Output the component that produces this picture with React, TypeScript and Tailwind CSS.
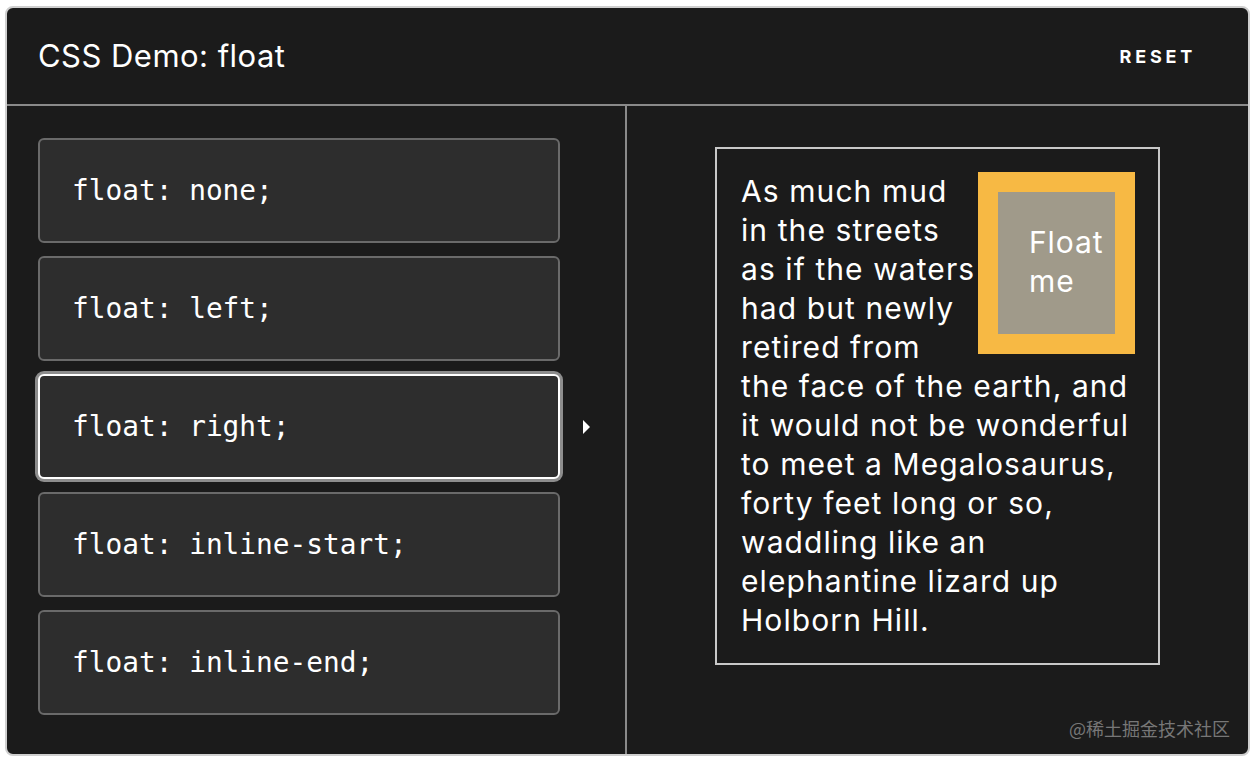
import React from "react";

const options = [
  "float: none;",
  "float: left;",
  "float: right;",
  "float: inline-start;",
  "float: inline-end;",
];

const lines = [
  "As much mud",
  "in the streets",
  "as if the waters",
  "had but newly",
  "retired from",
  "the face of the earth, and",
  "it would not be wonderful",
  "to meet a Megalosaurus,",
  "forty feet long or so,",
  "waddling like an",
  "elephantine lizard up",
  "Holborn Hill.",
];

export default function App() {
  return (
    <div className="w-[1254px] h-[764px] bg-white pt-[6px] pl-[5px]">
      <div className="w-[1245px] h-[750px] rounded-[8px] border-2 border-[#cfcfcf] bg-[#1b1b1b] flex flex-col overflow-hidden font-['Inter',sans-serif] text-white">
        {/* header */}
        <div className="h-[98px] flex items-center justify-between pl-[31px] pr-[52px] border-b-2 border-[#8a8a8a]">
          <h1 className="text-[31px] font-normal tracking-[0.015em]">CSS Demo: float</h1>
          <button className="text-[18px] font-bold tracking-[0.21em]">RESET</button>
        </div>

        <div className="flex flex-1 relative">
          {/* choices */}
          <div className="w-[620px] border-r-2 border-[#8a8a8a] pl-[31px] pt-[32px] flex flex-col gap-[13px]">
            {options.map((o, i) => {
              const active = i === 2;
              return (
                <div key={o} className="flex items-center">
                  <div
                    className={
                      active
                        ? "w-[522px] h-[105px] rounded-[6px] border-2 border-white bg-[#2d2d2d] ring-[3px] ring-[#8d8d8d] flex items-center pl-[32px]"
                        : "w-[522px] h-[105px] rounded-[6px] border-2 border-[#6a6a6a] bg-[#2d2d2d] flex items-center pl-[32px]"
                    }
                  >
                    <span className="font-['DejaVu_Sans_Mono',monospace] text-[27.8px]">{o}</span>
                  </div>
                  {active && (
                    <svg width="10" height="16" viewBox="0 0 10 16" className="ml-[22px]">
                      <path d="M1 1 L8 8 L1 15 Z" fill="white" />
                    </svg>
                  )}
                </div>
              );
            })}
          </div>

          {/* output */}
          <div className="flex-1 flex justify-center pt-[41px]">
            <div className="w-[445px] h-[518px] border-2 border-[#c8c8c8] pl-[24px] pr-[23px] pt-[23px]">
              <div className="float-right ml-[4px] border-[20px] border-[#f7b944] bg-[#a09a8a] w-[157px] h-[182px] pl-[31px] pt-[31px] text-[30px] leading-[39px] tracking-[0.03em]">
                Float
                <br />
                me
              </div>
              <p className="text-[30px] leading-[39px] tracking-[0.036em] whitespace-nowrap">
                {lines.map((l) => (
                  <React.Fragment key={l}>
                    {l}
                    <br />
                  </React.Fragment>
                ))}
              </p>
            </div>
          </div>

          <div className="absolute right-[18px] bottom-[12px] text-[18px] text-[#777] font-['Noto_Sans_CJK_SC',sans-serif]">
            @稀土掘金技术社区
          </div>
        </div>
      </div>
    </div>
  );
}
